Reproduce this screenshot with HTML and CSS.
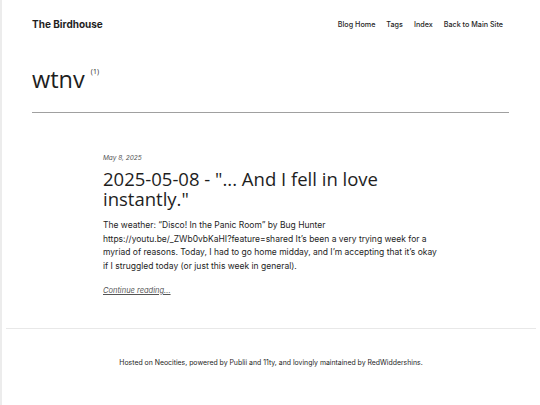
FILE: index.html
```html
<!DOCTYPE html>
<html lang="en">
<head>
    <meta charset="UTF-8">
    <meta name="viewport" content="width=device-width, initial-scale=1.0">
    <title>wtnv - The Birdhouse</title>
    <link rel="stylesheet" href="styles.css">
</head>
<body>
    <div class="page">
        <header class="site-header">
            <a class="logo" href="#">The Birdhouse</a>
            <nav class="nav">
                <a href="#">Blog Home</a>
                <a href="#">Tags</a>
                <a href="#">Index</a>
                <a href="#">Back to Main Site</a>
            </nav>
        </header>

        <div class="tag-head">
            <h1>wtnv <sup>(1)</sup></h1>
        </div>

        <main class="posts">
            <article class="post">
                <div class="post-date">May 8, 2025</div>
                <h2>2025-05-08 - "... And I fell in love instantly."</h2>
                <p>The weather: “Disco! In the Panic Room” by Bug Hunter https://youtu.be/_ZWb0vbKaHI?feature=shared It’s been a very trying week for a myriad of reasons. Today, I had to go home midday, and I’m accepting that it’s okay if I struggled today (or just this week in general).</p>
                <a class="more" href="#">Continue reading...</a>
            </article>
        </main>

        <footer class="site-footer">
            Hosted on Neocities, powered by Publii and 11ty, and lovingly maintained by RedWiddershins.
        </footer>
    </div>
</body>
</html>
```

FILE: styles.css
```css
body {
    margin: 0;
    padding: 0;
    background-color: #fff;
    color: #1e1e1e;
    font-family: Inter, "Noto Sans", Arial, sans-serif;
}
a {
    color: inherit;
    text-decoration: none;
}
.page {
    border-left: 2px solid #ececec;
    min-height: 405px;
    box-sizing: border-box;
    padding: 0 4px;
}
.site-header {
    display: flex;
    justify-content: space-between;
    align-items: center;
    padding: 16px 33px 0 26px;
    height: 16px;
}
.logo {
    font-size: 10px;
    font-weight: 700;
}
.nav {
    display: flex;
    gap: 11px;
    font-size: 7.2px;
    font-weight: 500;
}
.tag-head {
    margin: 0 27px 0 26px;
    padding-top: 25px;
    padding-bottom: 18px;
    border-bottom: 1px solid #a0a0a0;
}
h1 {
    margin: 0;
    font-family: "Open Sans", Arial, sans-serif;
    font-weight: normal;
    font-size: 23.5px;
    line-height: 30px;
}
h1 sup {
    font-size: 7px;
    vertical-align: 14px;
    margin-left: 0;
}
.posts {
    width: 336px;
    margin: 0 auto;
    padding-top: 41px;
    padding-bottom: 31px;
}
.post-date {
    font-size: 6.5px;
    font-style: italic;
    color: #555;
}
h2 {
    margin: 7px 0 10px;
    font-family: "Open Sans", Arial, sans-serif;
    font-weight: normal;
    font-size: 18.5px;
    line-height: 20px;
}
p {
    margin: 0 0 3px;
    font-size: 8.5px;
    line-height: 13.7px;
}
.more {
    font-size: 7.5px;
    font-style: italic;
    text-decoration: underline;
    color: #555;
}
.site-footer {
    border-top: 1px solid #e8e8e8;
    text-align: center;
    font-size: 6.9px;
    padding-top: 29px;
}
```
